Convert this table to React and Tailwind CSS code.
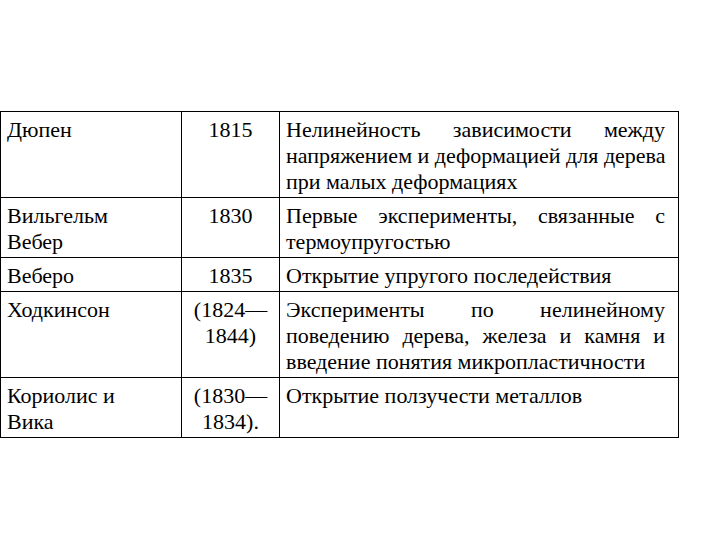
const rows = [
  {
    name: ['Дюпен'],
    year: ['1815'],
    lines: [
      ['Нелинейность зависимости между', true],
      ['напряжением и деформацией для дерева', false],
      ['при малых деформациях', false],
    ],
  },
  {
    name: ['Вильгельм', 'Вебер'],
    year: ['1830'],
    lines: [
      ['Первые эксперименты, связанные с', true],
      ['термоупругостью', false],
    ],
  },
  {
    name: ['Веберо'],
    year: ['1835'],
    lines: [['Открытие упругого последействия', false]],
  },
  {
    name: ['Ходкинсон'],
    year: ['(1824—', '1844)'],
    lines: [
      ['Эксперименты по нелинейному', true],
      ['поведению дерева, железа и камня и', true],
      ['введение понятия микропластичности', false],
    ],
  },
  {
    name: ['Кориолис и', 'Вика'],
    year: ['(1830—', '1834).'],
    lines: [['Открытие ползучести металлов', false]],
  },
]

export default function App() {
  return (
    <div className="w-[720px] h-[540px] bg-white pt-[111px] font-['Liberation_Serif'] text-[22px] leading-[26px] text-black">
      <table className="border-collapse table-fixed w-[678px]">
        <colgroup>
          <col className="w-[181px]" />
          <col className="w-[98px]" />
          <col className="w-[399px]" />
        </colgroup>
        <tbody>
          {rows.map((r, i) => (
            <tr key={i}>
              {/* name */}
              <td className="border border-black align-top pl-[6px] pr-[4px] pt-[5px] pb-[2px]">
                {r.name.map((t, j) => <div key={j}>{t}</div>)}
              </td>
              {/* years */}
              <td className="border border-black align-top text-center px-[2px] pt-[5px] pb-[2px]">
                {r.year.map((t, j) => <div key={j} className="whitespace-nowrap">{t}</div>)}
              </td>
              {/* what was done */}
              <td className="border border-black align-top pl-[6px] pr-[13px] pt-[5px] pb-[2px]">
                {r.lines.map(([t, just], j) => (
                  <div key={j} className={just ? 'text-justify [text-align-last:justify] whitespace-nowrap' : 'whitespace-nowrap'}>
                    {t}
                  </div>
                ))}
              </td>
            </tr>
          ))}
        </tbody>
      </table>
    </div>
  )
}
